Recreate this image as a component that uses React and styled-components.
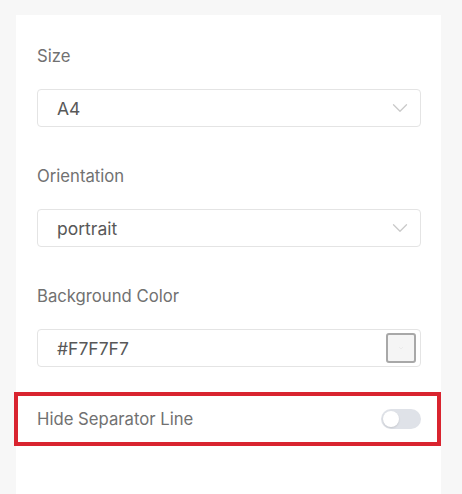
import React, { useState } from 'react';
import styled, { createGlobalStyle } from 'styled-components';

const GlobalStyle = createGlobalStyle`
  html, body {
    margin: 0;
    padding: 0;
    background: #f7f7f7;
  }
  body {
    font-family: Inter, "Noto Sans", "Liberation Sans", sans-serif;
  }
`;

const Panel = styled.div`
  box-sizing: border-box;
  width: 425px;
  min-height: 479px;
  margin: 15px 0 0 16px;
  padding: 31px 20px 0 21px;
  background: #ffffff;
`;

const Field = styled.div`
  margin-bottom: ${(p) => p.gap || 39}px;
`;

const Label = styled.div`
  font-size: 16.7px;
  line-height: 20px;
  color: #717171;
  margin-bottom: 23px;
`;

const InputBox = styled.div`
  box-sizing: border-box;
  height: 38px;
  display: flex;
  align-items: center;
  justify-content: space-between;
  padding: 0 ${(p) => p.padRight || 7}px 0 19px;
  border: 1px solid #e4e4e4;
  border-radius: 4px;
  background: #fff;
  font-size: 17.5px;
  color: #585858;
`;

const Chevron = () => (
  <svg width="26" height="26" viewBox="0 0 24 24" fill="none" stroke="#cacaca" strokeWidth="1.2" strokeLinecap="round" strokeLinejoin="round">
    <path d="m6 9 6 6 6-6" />
  </svg>
);

const Swatch = styled.div`
  box-sizing: border-box;
  width: 30px;
  height: 30px;
  border: 2px solid #a8a8a8;
  border-radius: 3px;
  background: ${(p) => p.color};
  display: flex;
  align-items: center;
  justify-content: center;
`;

const ToggleRow = styled.div`
  box-sizing: border-box;
  height: 54px;
  margin: 0 -20px 0 -23px;
  padding: 0 16px 0 19px;
  border: 4px solid #d9242f;
  display: flex;
  align-items: center;
  justify-content: space-between;
  font-size: 16.7px;
  color: #717171;
`;

const Track = styled.button`
  position: relative;
  width: 40px;
  height: 20px;
  padding: 0;
  border: none;
  border-radius: 10px;
  background: ${(p) => (p.on ? '#4f7cff' : '#dfe2e8')};
  cursor: pointer;
`;

const Knob = styled.span`
  position: absolute;
  top: 2px;
  left: ${(p) => (p.on ? 22 : 2)}px;
  width: 16px;
  height: 16px;
  border-radius: 50%;
  background: #fff;
  box-shadow: 0 1px 2px rgba(0, 0, 0, 0.12);
`;

export default function App() {
  const [hide, setHide] = useState(false);

  return (
    <>
      <GlobalStyle />
      <Panel>
        <Field>
          <Label>Size</Label>
          <InputBox>
            A4
            <Chevron />
          </InputBox>
        </Field>
        <Field>
          <Label>Orientation</Label>
          <InputBox>
            portrait
            <Chevron />
          </InputBox>
        </Field>
        <Field gap={25}>
          <Label>Background Color</Label>
          <InputBox padRight={4}>
            #F7F7F7
            <Swatch color="#f5f5f5">
              <svg width="8" height="8" viewBox="0 0 24 24" fill="none" stroke="#e6e6e6" strokeWidth="2">
                <path d="m6 9 6 6 6-6" />
              </svg>
            </Swatch>
          </InputBox>
        </Field>
        <ToggleRow>
          Hide Separator Line
          <Track on={hide} onClick={() => setHide(!hide)}>
            <Knob on={hide} />
          </Track>
        </ToggleRow>
      </Panel>
    </>
  );
}
